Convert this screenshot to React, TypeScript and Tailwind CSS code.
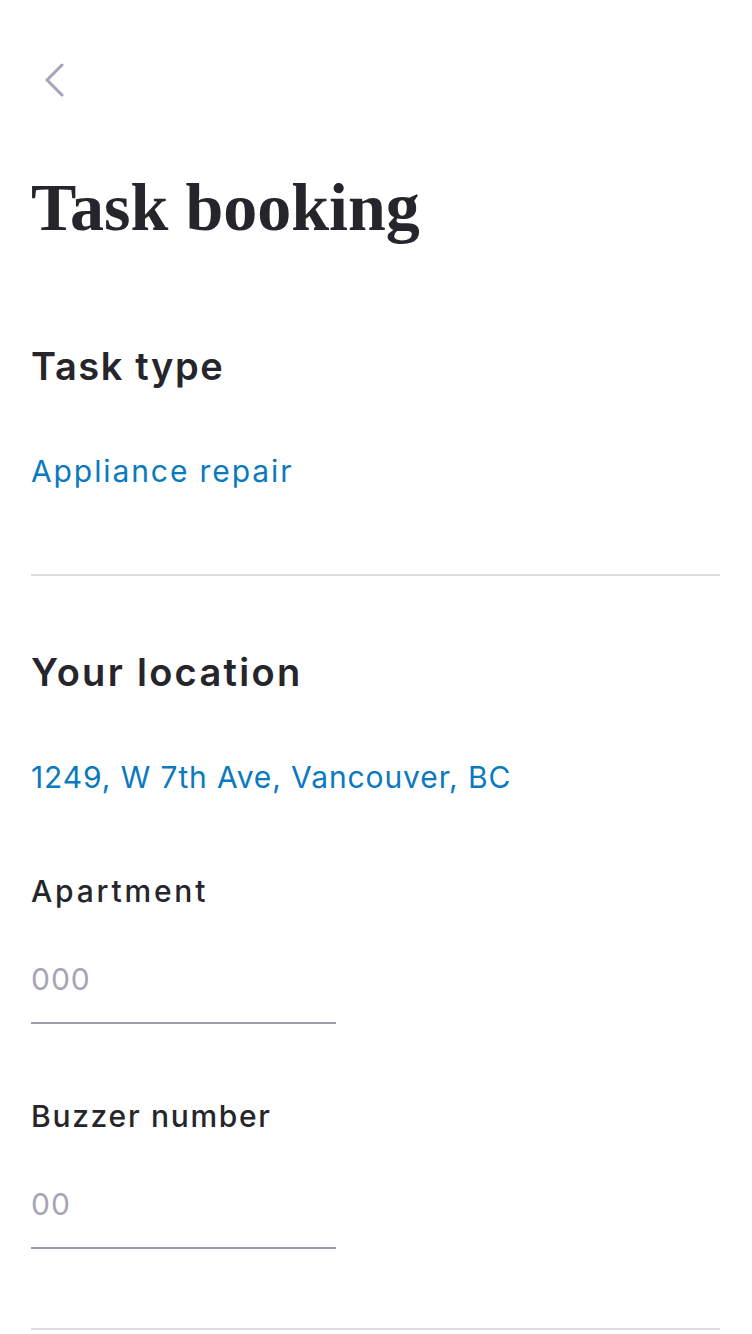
const sans = "font-['Inter','Noto_Sans',sans-serif]"

function Field({ label, placeholder, className }: { label: string; placeholder: string; className: string }) {
  return (
    <div className={className}>
      <label className="block text-[30px] leading-[30px] font-medium text-[#26252b]">{label}</label>
      <div className="w-[305px] border-b-2 border-[#9d9ca8] mt-[58px] pb-[28px]">
        <input
          type="text"
          placeholder={placeholder}
          className={`${sans} block w-full h-[30px] leading-[30px] text-[30px] tracking-[1px] text-[#26252b] placeholder:text-[#a6a5b8] bg-transparent outline-none p-0`}
        />
      </div>
    </div>
  )
}

export default function App() {
  return (
    <div className={`${sans} min-h-[1334px] bg-white px-[31px] pr-[32px]`}>
      {/* Back */}
      <button className="block pt-[63px] ml-[14px]" aria-label="Back">
        <svg width="20" height="34" viewBox="0 0 20 34" fill="none">
          <polyline
            points="17,2 2,17 17,32"
            stroke="#a4a3b8"
            strokeWidth="3"
            strokeLinecap="round"
            strokeLinejoin="round"
          />
        </svg>
      </button>

      <h1 className="mt-[76px] font-['Liberation_Serif','Times_New_Roman',serif] font-bold text-[68px] leading-[68px] text-[#26252b]">
        Task booking
      </h1>

      {/* Task type */}
      <section>
        <h2 className="mt-[106px] text-[38px] leading-[38px] font-semibold text-[#26252b] tracking-[1.6px]">Task type</h2>
        <p className="mt-[71px] text-[30px] leading-[30px] text-[#0a79c0] tracking-[1.9px]">Appliance repair</p>
      </section>

      <div className="mt-[88px] h-[2px] bg-[#dedede]" />

      {/* Location */}
      <section>
        <h2 className="mt-[77px] text-[38px] leading-[38px] font-semibold text-[#26252b] tracking-[2.3px]">Your location</h2>
        <p className="mt-[71px] text-[30px] leading-[30px] text-[#0a79c0] tracking-[0.9px]">1249, W 7th Ave, Vancouver, BC</p>

        <Field label="Apartment" placeholder="000" className="mt-[84px] tracking-[2.8px]" />
        <Field label="Buzzer number" placeholder="00" className="mt-[77px] tracking-[1.7px]" />
      </section>

      <div className="mt-[79px] h-[2px] bg-[#dedede]" />
    </div>
  )
}
